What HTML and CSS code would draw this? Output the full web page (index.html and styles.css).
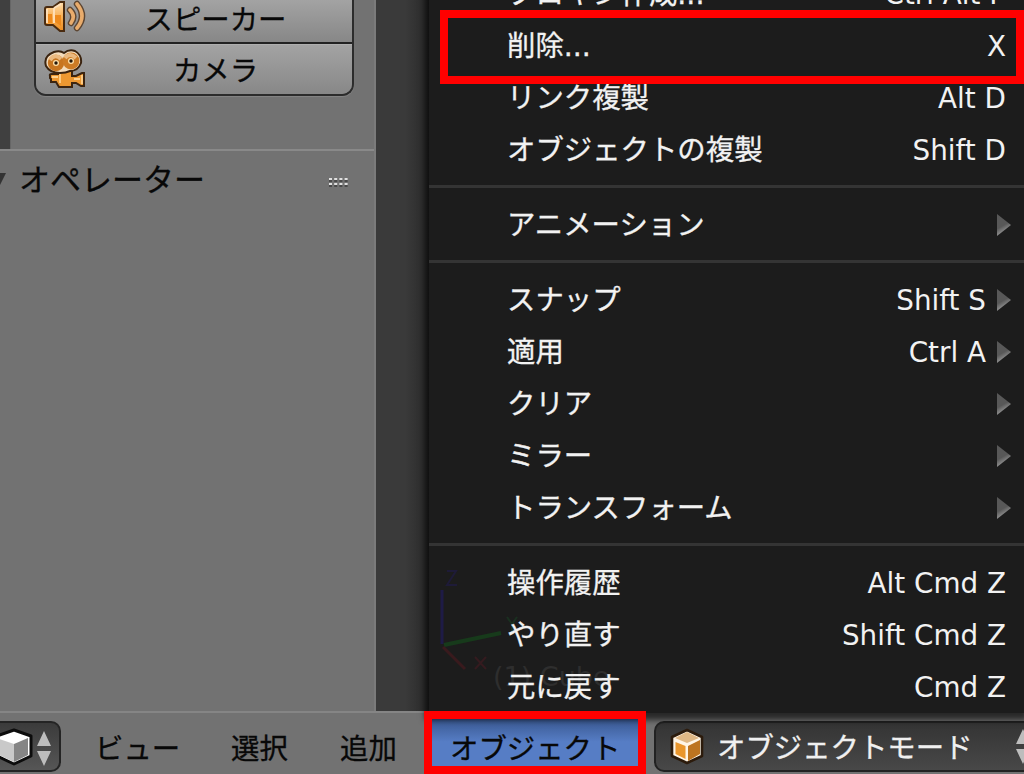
FILE: index.html
```
<!DOCTYPE html>
<html lang="ja">
<head>
    <meta charset="UTF-8">
    <title>Blender</title>
    <link rel="stylesheet" href="styles.css">
</head>
<body>
    <div class="workspace">
        <!-- ツールシェルフ -->
        <div class="tool-shelf">
            <div class="tools">
                <div class="tab-strip"></div>
                <div class="button-group">
                    <div class="tool-button">
                        <svg class="tool-icon" width="44" height="36" viewBox="0 0 44 36">
                            <defs>
                                <linearGradient id="orange" x1="0" y1="0" x2="0" y2="1">
                                    <stop offset="0" stop-color="#ffdfae"/>
                                    <stop offset="0.5" stop-color="#f9b157"/>
                                    <stop offset="1" stop-color="#ee8d20"/>
                                </linearGradient>
                            </defs>
                            <path d="M3 10q0-2 2-2h6L18 3h4v29h-4l-7-6H5q-2 0-2-2z" fill="url(#orange)" stroke="#4a2b10" stroke-width="2"/>
                            <path d="M5 15h5v9H5zM13 16h6v11l-6-4z" fill="#ee8a1c"/>
                            <path d="M5 10v14M12 9v15M12 9l7-4" stroke="#ffe2bd" stroke-width="1.8" fill="none"/>
                            <path d="M28 11q6 6 1 13M35 5q10 12 0 24" fill="none" stroke="#5d4632" stroke-width="6.4" stroke-linecap="round"/>
                            <path d="M28 11q6 6 1 13M35 5q10 12 0 24" fill="none" stroke="#e9ac6c" stroke-width="3.6" stroke-linecap="round"/>
                        </svg>
                        <span>スピーカー</span>
                    </div>
                    <div class="tool-button">
                        <svg class="tool-icon" width="44" height="40" viewBox="0 0 44 40">
                            <path d="M8 27q-1-2 2-2h6v-3h14v5h4l6-3h2v13h-3l-5-3h-4v4H17l-3-5H9v-3l-1-1z" fill="#ed9831" stroke="#3b2410" stroke-width="2"/>
                            <path d="M10 28h6M18 24v10M32 30h6M40 26v9" fill="none" stroke="#ffd08c" stroke-width="1.8"/>
                            <path d="M12 3q6-2 10 1 5-4 11-2 7 4 6 12-3 8-11 8-4 2-10 2-10 0-14-7Q1 7 12 3z" fill="#f3dcbc" stroke="#3b2410" stroke-width="2"/>
                            <circle cx="14" cy="14" r="8.2" fill="#c77520"/>
                            <circle cx="29" cy="12" r="8.4" fill="#cc7b25"/>
                            <path d="M8 11q5-7 11-1M23 9q5-6 11 0" fill="none" stroke="#eab980" stroke-width="4"/>
                            <circle cx="14" cy="14" r="3" fill="#ffe0a8"/>
                            <circle cx="29" cy="12" r="3" fill="#ffe0a8"/>
                            <circle cx="14" cy="14" r="1.7" fill="#22160b"/>
                            <circle cx="29" cy="12" r="1.7" fill="#22160b"/>
                        </svg>
                        <span>カメラ</span>
                    </div>
                </div>
            </div>
            <div class="operator-panel">
                <svg class="collapse" width="7" height="14" viewBox="0 0 7 14"><path d="M0 0h6L0 12z" fill="#333"/></svg>
                <span class="panel-title">オペレーター</span>
                <svg class="grip" width="20" height="11" viewBox="0 0 20 11">
                    <path d="M0 4h20M0 9h20" stroke="#3c3c3c" stroke-width="1.6" stroke-dasharray="3 2.2"/>
                    <path d="M0 2h20M0 7h20" stroke="#e0e0e0" stroke-width="2" stroke-dasharray="3 2.2"/>
                </svg>
            </div>
        </div>
        <div class="viewport"></div>

        <!-- オブジェクトメニュー -->
        <div class="menu">
            <svg class="axis" width="200" height="150" viewBox="0 0 200 150">
                <path d="M13 31v54" stroke="#1e1b46" stroke-width="3"/>
                <path d="M15 86L72 74" stroke="#173a1b" stroke-width="4"/>
                <path d="M14 88l22 22" stroke="#391a1d" stroke-width="3"/>
                <path d="M18 12h9L18 26h10" fill="none" stroke="#1e1b38" stroke-width="2"/>
                <path d="M78 58l5 7 5-7M83 65v8" fill="none" stroke="#1a3020" stroke-width="2"/>
                <path d="M46 98l11 12M57 98l-11 12" stroke="#351b1f" stroke-width="2"/>
                <text x="64" y="127" class="cube-label">(1) Cube</text>
            </svg>
            <div class="menu-item"><span>プロキシ作成...</span><kbd>Ctrl Alt P</kbd></div>
            <div class="menu-item"><span>削除...</span><kbd>X</kbd></div>
            <div class="menu-item"><span>リンク複製</span><kbd>Alt D</kbd></div>
            <div class="menu-item"><span>オブジェクトの複製</span><kbd>Shift D</kbd></div>
            <div class="separator"></div>
            <div class="menu-item submenu"><span>アニメーション</span></div>
            <div class="separator"></div>
            <div class="menu-item submenu"><span>スナップ</span><kbd>Shift S</kbd></div>
            <div class="menu-item submenu"><span>適用</span><kbd>Ctrl A</kbd></div>
            <div class="menu-item submenu"><span>クリア</span></div>
            <div class="menu-item submenu"><span>ミラー</span></div>
            <div class="menu-item submenu"><span>トランスフォーム</span></div>
            <div class="separator"></div>
            <div class="menu-item"><span>操作履歴</span><kbd>Alt Cmd Z</kbd></div>
            <div class="menu-item"><span>やり直す</span><kbd>Shift Cmd Z</kbd></div>
            <div class="menu-item"><span>元に戻す</span><kbd>Cmd Z</kbd></div>
        </div>
    </div>

    <!-- ヘッダーバー -->
    <div class="header-bar">
        <div class="editor-type">
            <svg width="52" height="42" viewBox="0 0 52 42">
                <path d="M-3 8L14 2l17 6v20L14 36-3 28z" fill="#fff" stroke="#0c0c0c" stroke-width="3" stroke-linejoin="round"/>
                <path d="M-1 11l15 5v18L-1 27z" fill="#c9c9c9"/>
                <path d="M14 16l14-6v17l-14 7z" fill="#858585"/>
                <path d="M44 3l7 15H37zM44 38l7-15H37z" fill="#bdbdbd"/>
            </svg>
        </div>
        <span class="header-menu view">ビュー</span>
        <span class="header-menu select">選択</span>
        <span class="header-menu add">追加</span>
        <span class="header-menu object">オブジェクト</span>
        <div class="mode-select">
            <svg width="36" height="38" viewBox="0 0 36 38">
                <path d="M18 2l15 7v19L18 35 3 28V9z" fill="#fff5e6" stroke="#2c1b0c" stroke-width="2.6" stroke-linejoin="round"/>
                <path d="M18 4l12 6-12 5-12-5z" fill="#e0b885"/>
                <path d="M6.500 14l10 4v13l-10-5z" fill="#ea962c"/>
                <path d="M19 18l12-6v14l-12 7z" fill="#bd7420"/>
            </svg>
            <span>オブジェクトモード</span>
            <svg class="mode-arrows" width="14" height="36" viewBox="0 0 14 36"><path d="M7 0l7 15H0zM7 35l7-15H0z" fill="#bdbdbd"/></svg>
        </div>
    </div>

    <!-- 強調枠 -->
    <div class="highlight highlight-delete"></div>
    <div class="highlight highlight-object"></div>
</body>
</html>
```
FILE: styles.css
```
* {
    box-sizing: border-box;
}
body {
    margin: 0;
    width: 1024px;
    height: 774px;
    display: flex;
    flex-direction: column;
    position: relative;
    overflow: hidden;
    background-color: #727272;
    font-family: "DejaVu Sans", "Noto Sans CJK JP", sans-serif;
    font-size: 28.4px;
    line-height: 52px;
    white-space: nowrap;
    color: #080808;
    -webkit-text-stroke: 0.3px;
}
.workspace {
    height: 711px;
    display: flex;
    flex-shrink: 0;
}
/* ツールシェルフ */
.tool-shelf {
    width: 376px;
    flex-shrink: 0;
    border-right: 2px solid #7b7b7b;
}
.tools {
    height: 149px;
    display: flex;
}
.tab-strip {
    width: 11px;
    margin-right: 23px;
    background-color: #404040;
    border-right: 1px solid #666;
}
.button-group {
    width: 320px;
    height: 96px;
    border: 2px solid #2c2c2c;
    border-top: 0;
    border-radius: 0 0 12px 12px;
    overflow: hidden;
    box-shadow: 0 1px 1px #858585;
}
.tool-button {
    height: 51px;
    display: flex;
    align-items: center;
    background: linear-gradient(#a3a3a3, #878787);
    border-top: 1px solid #afafaf;
}
.tool-button:first-child {
    height: 44px;
    border-top: 0;
    border-bottom: 2px solid #222;
}
.tool-button span {
    flex: 1;
    padding-top: 3px;
    padding-right: 7px;
    text-align: center;
}
.tool-button:first-child span {
    padding-top: 0;
}
.tool-icon {
    margin-left: 6px;
    margin-top: -2px;
}
.tool-button:first-child .tool-icon {
    margin-top: -8px;
}
.operator-panel {
    display: flex;
    align-items: center;
    height: 60px;
    width: 374px;
    border-top: 2px solid #898989;
}
.panel-title {
    margin-left: 12px;
    font-size: 31px;
}
.grip {
    margin: 4px 25px 0 auto;
}
.viewport {
    width: 53px;
    background: linear-gradient(to right, #3a3a3a 55%, #292929);
}
/* メニュー */
.menu {
    position: absolute;
    z-index: 1;
    left: 429px;
    right: 0;
    top: -31px;
    height: 744px;
    background-color: #1c1c1c;
    color: #f2f2f2;
    box-shadow: 0 3px 6px 4px rgba(0, 0, 0, 0.65);
}
.axis {
    position: absolute;
    left: 0;
    top: 590px;
}
.cube-label {
    font-size: 27px;
    fill: #2e2e2e;
}
.menu-item {
    position: relative;
    height: 52px;
    padding: 0 18px 0 78px;
    display: flex;
    justify-content: space-between;
    align-items: center;
}
.menu-item kbd {
    font-family: "DejaVu Sans", sans-serif;
    font-size: 27.8px;
    -webkit-text-stroke: 0;
}
.submenu {
    padding-right: 38px;
}
.submenu::after {
    content: "";
    position: absolute;
    right: 13px;
    top: 14px;
    width: 14px;
    height: 22px;
    background: linear-gradient(150deg, #585858 50%, #888 70%);
    clip-path: polygon(0 0, 100% 50%, 0 100%);
}
.separator {
    height: 3px;
    margin: 8px 0 12px;
    background-color: #343434;
}
/* ヘッダー */
.header-bar {
    height: 63px;
    display: flex;
    align-items: flex-start;
    background-color: #727272;
    border-top: 2px solid #858585;
    padding-top: 8px;
}
.header-bar > * {
    flex-shrink: 0;
}
.editor-type {
    width: 61px;
    height: 51px;
    padding-top: 5px;
    border: 2px solid #242424;
    border-left: 0;
    border-radius: 0 10px 10px 0;
    background: linear-gradient(#3b3b3b, #565656);
    line-height: 0;
}
.header-menu {
    height: 51px;
    padding-top: 3px;
}
.view {
    margin-left: 34px;
    width: 136px;
}
.select {
    width: 109px;
}
.add {
    width: 84px;
}
.object {
    width: 222px;
    height: 55px;
    margin-top: -4px;
    padding-top: 7px;
    padding-left: 26px;
    background: linear-gradient(#36548b, #567dc5 45%, #567dc5);
}
.mode-select {
    width: 390px;
    height: 51px;
    margin-left: 8px;
    display: flex;
    align-items: center;
    gap: 12px;
    padding-left: 13px;
    border: 2px solid #222;
    border-radius: 10px;
    background: linear-gradient(#343434, #484848);
    color: #f0f0f0;
}
.mode-select span {
    padding-top: 4px;
}
.mode-arrows {
    margin-left: 31px;
}
/* 強調枠 */
.highlight {
    position: absolute;
    z-index: 2;
    border: 8px solid #f00;
}
.highlight-delete {
    left: 440px;
    top: 10px;
    width: 584px;
    height: 74px;
}
.highlight-object {
    left: 424px;
    top: 711px;
    width: 222px;
    height: 63px;
}
```
